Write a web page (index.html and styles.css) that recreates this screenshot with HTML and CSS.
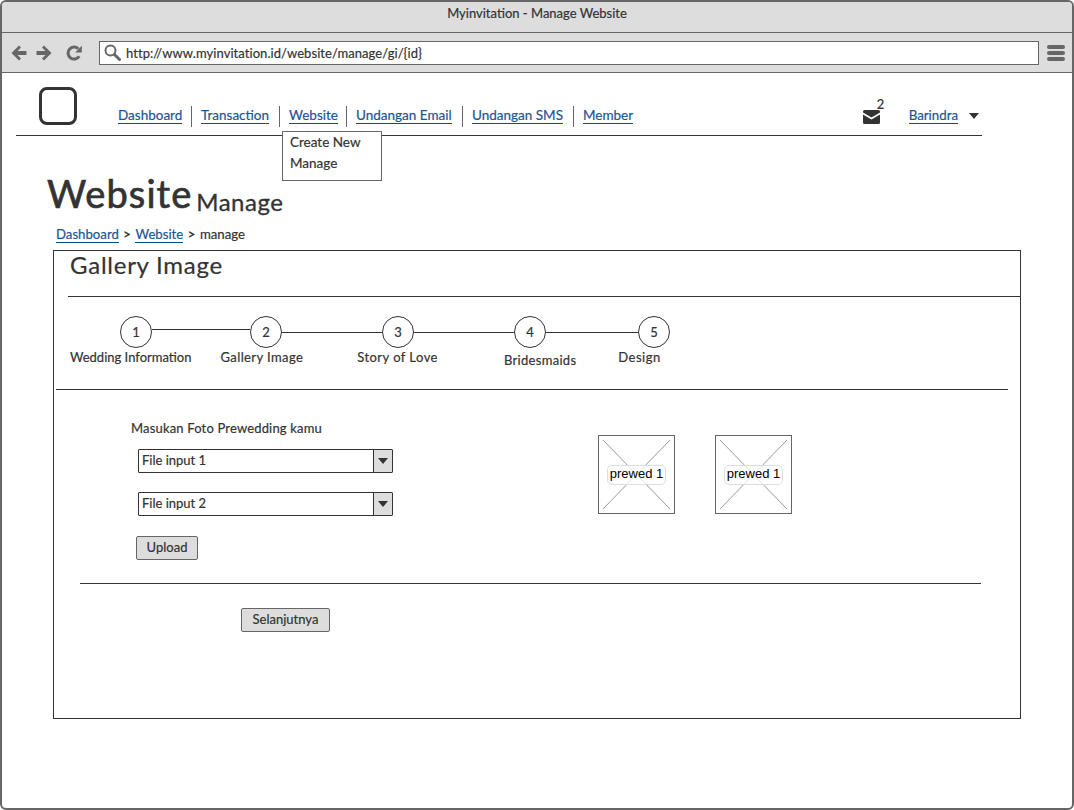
FILE: index.html
```html
<!DOCTYPE html>
<html>
<head>
    <title>Myinvitation - Manage Website</title>
    <link rel="stylesheet" href="styles.css">
</head>
<body>
<div class="window">
    <div class="titlebar">Myinvitation - Manage Website</div>

    <div class="toolbar">
        <svg class="tool-icon" width="16" height="16" viewBox="0 0 16 16"><path d="M8 .5 .5 8 8 15.500 10 13.500 6.500 10H15.500V6H6.500L10 2.500Z"/></svg>
        <svg class="tool-icon" width="16" height="16" viewBox="0 0 16 16"><path d="M8 .5 15.500 8 8 15.500 6 13.500 9.500 10H.5V6H9.500L6 2.500Z"/></svg>
        <svg class="tool-icon reload" width="16" height="16" viewBox="0 0 16 16"><path d="M13.200 11.200A6 6 0 1 1 12.300 3.800" fill="none" stroke="#666" stroke-width="3"/><path d="M15.800 .8V7.500H9.200Z"/></svg>
        <div class="address">
            <svg width="17" height="17" viewBox="0 0 17 17"><circle cx="6.500" cy="6.500" r="5" fill="none" stroke="#666" stroke-width="2"/><path d="M10.500 10.500 15.500 15.500" stroke="#666" stroke-width="3" stroke-linecap="round"/></svg>
            <span>http://www.myinvitation.id/website/manage/gi/{id}</span>
        </div>
        <div class="hamburger"><i></i><i></i><i></i></div>
    </div>

    <div class="page">
        <header class="header">
            <div class="logo"></div>
            <ul class="nav">
                <li><a href="#">Dashboard</a></li>
                <li><a href="#">Transaction</a></li>
                <li class="has-menu">
                    <a href="#">Website</a>
                    <div class="menu">
                        <div>Create New</div>
                        <div>Manage</div>
                    </div>
                </li>
                <li><a href="#">Undangan Email</a></li>
                <li><a href="#">Undangan SMS</a></li>
                <li><a href="#">Member</a></li>
            </ul>
            <div class="user">
                <div class="mail">
                    <svg width="17" height="14" viewBox="0 0 17 14"><path d="M1.500 0H15.500A1.500 1.500 0 0 1 17 1.500V2.500L8.500 7.500 0 2.500V1.500A1.500 1.500 0 0 1 1.500 0ZM0 4.500 8.500 9.500 17 4.500V12.500A1.500 1.500 0 0 1 15.500 14H1.500A1.500 1.500 0 0 1 0 12.500Z"/></svg>
                    <span class="count">2</span>
                </div>
                <a href="#">Barindra</a>
                <span class="caret"></span>
            </div>
        </header>

        <h1 class="page-title">Website <small>Manage</small></h1>

        <div class="crumbs">
            <a href="#">Dashboard</a>
            <span class="gt">&gt;</span>
            <a href="#">Website</a>
            <span class="gt">&gt;</span>
            <span>manage</span>
        </div>

        <div class="panel">
            <h2 class="panel-title">Gallery Image</h2>

            <div class="steps">
                <div class="step-circles">
                    <div class="circle">1</div><div class="bar w1"></div>
                    <div class="circle">2</div><div class="bar w2"></div>
                    <div class="circle">3</div><div class="bar w2"></div>
                    <div class="circle">4</div><div class="bar w3"></div>
                    <div class="circle">5</div>
                </div>
                <div class="step-labels">
                    <span class="lb1">Wedding Information</span>
                    <span class="lb2">Gallery Image</span>
                    <span class="lb3">Story of Love</span>
                    <span class="lb4">Bridesmaids</span>
                    <span class="lb5">Design</span>
                </div>
            </div>

            <div class="upload">
                <div class="upload-form">
                    <div class="upload-label">Masukan Foto Prewedding kamu</div>
                    <div class="select"><span>File input 1</span><b><i></i></b></div>
                    <div class="select"><span>File input 2</span><b><i></i></b></div>
                    <button class="btn btn-upload">Upload</button>
                </div>
                <div class="thumbs">
                    <div class="thumb">
                        <svg width="75" height="77" viewBox="0 0 75 77"><path d="M4 4 71 73M71 4 4 73" stroke="#999" fill="none"/></svg>
                        <span>prewed 1</span>
                    </div>
                    <div class="thumb">
                        <svg width="75" height="77" viewBox="0 0 75 77"><path d="M4 4 71 73M71 4 4 73" stroke="#999" fill="none"/></svg>
                        <span>prewed 1</span>
                    </div>
                </div>
            </div>

            <div class="next-row">
                <button class="btn btn-next">Selanjutnya</button>
            </div>
        </div>
    </div>
</div>
</body>
</html>
```

FILE: styles.css
```css
* {
    box-sizing: border-box;
}
body {
    margin: 0;
    font-family: Lato, 'Open Sans', sans-serif;
    font-size: 13.5px;
    color: #333;
    background: #fff;
    -webkit-text-stroke: 0.2px;
}
a {
    color: #1c5596;
    text-decoration: none;
    border-bottom: 1px solid #005196;
    line-height: 15px;
}
.window {
    width: 1074px;
    height: 810px;
    border: 2px solid #666;
    border-radius: 6px;
    overflow: hidden;
}
.titlebar {
    height: 31px;
    background: #ddd;
    border-bottom: 1px solid #666;
    text-align: center;
    line-height: 22px;
    font-size: 13px;
}
.toolbar {
    height: 40px;
    background: #ddd;
    border-bottom: 1px solid #666;
    display: flex;
    align-items: center;
    padding-left: 9px;
}
.tool-icon {
    fill: #666;
    margin-right: 9px;
    margin-top: 1px;
}
.reload {
    margin-left: 5px;
    margin-right: 17px;
}
.address {
    width: 940px;
    height: 24px;
    background: #fff;
    border: 1px solid #666;
    display: flex;
    align-items: center;
    padding-left: 4px;
    gap: 5px;
    font-size: 13px;
    letter-spacing: 0.06px;
}
.hamburger {
    margin-left: 8px;
    width: 18px;
}
.hamburger i {
    display: block;
    height: 4px;
    border-radius: 2px;
    background: #666;
    margin: 2px 0;
}
.page {
    padding: 0 0 0 14px;
}
.header {
    width: 966px;
    height: 63px;
    border-bottom: 1px solid #333;
    display: flex;
    align-items: flex-start;
}
.logo {
    width: 38px;
    height: 38px;
    margin: 14px 0 0 23px;
    border: 3px solid #333;
    border-radius: 8px;
}
.nav {
    list-style: none;
    margin: 33px 0 0 41px;
    padding: 0;
    display: flex;
    height: 21px;
}
.nav li {
    padding: 1px 0 0 9px;
    border-right: 1px solid #666;
    position: relative;
    white-space: nowrap;
}
.nav li:nth-child(1) {
    width: 74px;
    padding-left: 0;
}
.nav li:nth-child(2) { width: 88px; }
.nav li:nth-child(3) { width: 67px; }
.nav li:nth-child(4) { width: 116px; }
.nav li:nth-child(5) { width: 111px; }
.nav li:last-child {
    border-right: none;
}
.menu {
    position: absolute;
    left: 2px;
    top: 25px;
    width: 100px;
    height: 50px;
    background: #fff;
    border: 1px solid #666;
    padding: 0 7px;
    line-height: 21px;
    z-index: 2;
}
.user {
    margin: 33px 0 0 auto;
    padding-right: 3px;
    height: 21px;
    display: flex;
    align-items: flex-start;
}
.user > a {
    margin-top: 2px;
    font-size: 13.3px;
}
.mail {
    position: relative;
    width: 46px;
    padding-top: 4px;
}
.mail svg {
    fill: #333;
    display: block;
}
.count {
    position: absolute;
    left: 14px;
    top: -10px;
    font-size: 13px;
}
.caret {
    margin: 7px 0 0 11px;
    border: 5px solid transparent;
    border-top: 6px solid #333;
    border-bottom: none;
}
.page-title {
    margin: 35px 0 0 31px;
    font-size: 38px;
    line-height: 44px;
    font-weight: 400;
    letter-spacing: 1.1px;
    -webkit-text-stroke: 0.7px;
}
.page-title small {
    font-size: 24px;
    font-weight: 400;
    margin-left: -7px;
    letter-spacing: 0.5px;
    vertical-align: -3px;
    -webkit-text-stroke: 0.3px;
}
.crumbs {
    margin: 3px 0 0 40px;
    height: 23px;
    display: flex;
    align-items: flex-start;
    gap: 4.5px;
    line-height: 15px;
    font-size: 13.2px;
}
.gt {
    font-weight: 700;
}
.panel {
    width: 968px;
    height: 469px;
    margin: 0 0 0 37px;
    border: 1px solid #333;
}
.panel-title {
    margin: 0 0 0 14px;
    height: 46px;
    border-bottom: 1px solid #333;
    padding: 0 0 0 2px;
    font-size: 24px;
    line-height: 28px;
    font-weight: 400;
    letter-spacing: 0.75px;
}
.steps {
    margin: 0 12px 0 2px;
    height: 93px;
    border-bottom: 1px solid #333;
    padding: 19px 0 0 64px;
}
.step-circles {
    display: flex;
    align-items: center;
}
.circle {
    width: 32px;
    height: 32px;
    border: 1px solid #333;
    border-radius: 50%;
    display: flex;
    align-items: center;
    justify-content: center;
    font-size: 13px;
    flex: none;
}
.bar {
    height: 1px;
    background: #333;
}
.w1 {
    width: 98px;
    margin-top: -5px;
}
.w2 { width: 100px; }
.w3 { width: 92px; }
.step-labels {
    display: flex;
    margin: 0 0 0 -50px;
    line-height: 18px;
    font-size: 13px;
}
.lb2 { margin-left: 29px; letter-spacing: 0.4px; }
.lb3 { margin-left: 54px; letter-spacing: 0.45px; }
.lb4 { margin-left: 66px; margin-top: 3px; letter-spacing: 0.3px; }
.lb5 { margin-left: 42px; letter-spacing: 0.5px; }
.upload {
    height: 194px;
    display: flex;
    margin-left: 26px;
    border-bottom: 1px solid #333;
    margin-right: 39px;
}
.upload-form {
    width: 518px;
    padding: 29px 0 0 51px;
}
.upload-label {
    line-height: 18px;
    font-size: 13px;
    letter-spacing: 0.17px;
}
.select {
    width: 255px;
    height: 24px;
    margin: 12px 0 0 7px;
    border: 1px solid #333;
    border-radius: 1px;
    display: flex;
    align-items: center;
    justify-content: space-between;
    padding-left: 3px;
    font-size: 13px;
}
.select span {
    margin-top: -2px;
}
.select + .select {
    margin-top: 19px;
}
.select b {
    width: 19px;
    height: 100%;
    background: #ddd;
    border-left: 1px solid #333;
    display: flex;
    align-items: center;
    justify-content: center;
}
.select i {
    border: 5px solid transparent;
    border-top: 6px solid #333;
    border-bottom: none;
}
.btn {
    display: block;
    height: 24px;
    padding: 0 0 2px;
    background: #ddd;
    border: 1px solid #666;
    border-radius: 2px;
    font-family: inherit;
    font-size: 13px;
    color: #333;
}
.btn-upload {
    width: 62px;
    margin: 20px 0 0 5px;
}
.thumbs {
    display: flex;
    gap: 40px;
    padding-top: 45px;
}
.thumb {
    position: relative;
    width: 77px;
    height: 79px;
    border: 1px solid #666;
    display: flex;
    align-items: center;
    justify-content: center;
}
.thumb svg {
    position: absolute;
    left: 0;
    top: 0;
}
.thumb span {
    position: relative;
    width: 59px;
    height: 20px;
    border: 1px solid #ddd;
    border-radius: 5px;
    background: rgba(255, 255, 255, 0.75);
    font-family: 'Liberation Sans', Arial, sans-serif;
    font-size: 13px;
    line-height: 15px;
    text-align: center;
    color: #000;
    -webkit-text-stroke: 0;
}
.next-row {
    padding: 24px 0 0 187px;
}
.btn-next {
    width: 89px;
}
```
